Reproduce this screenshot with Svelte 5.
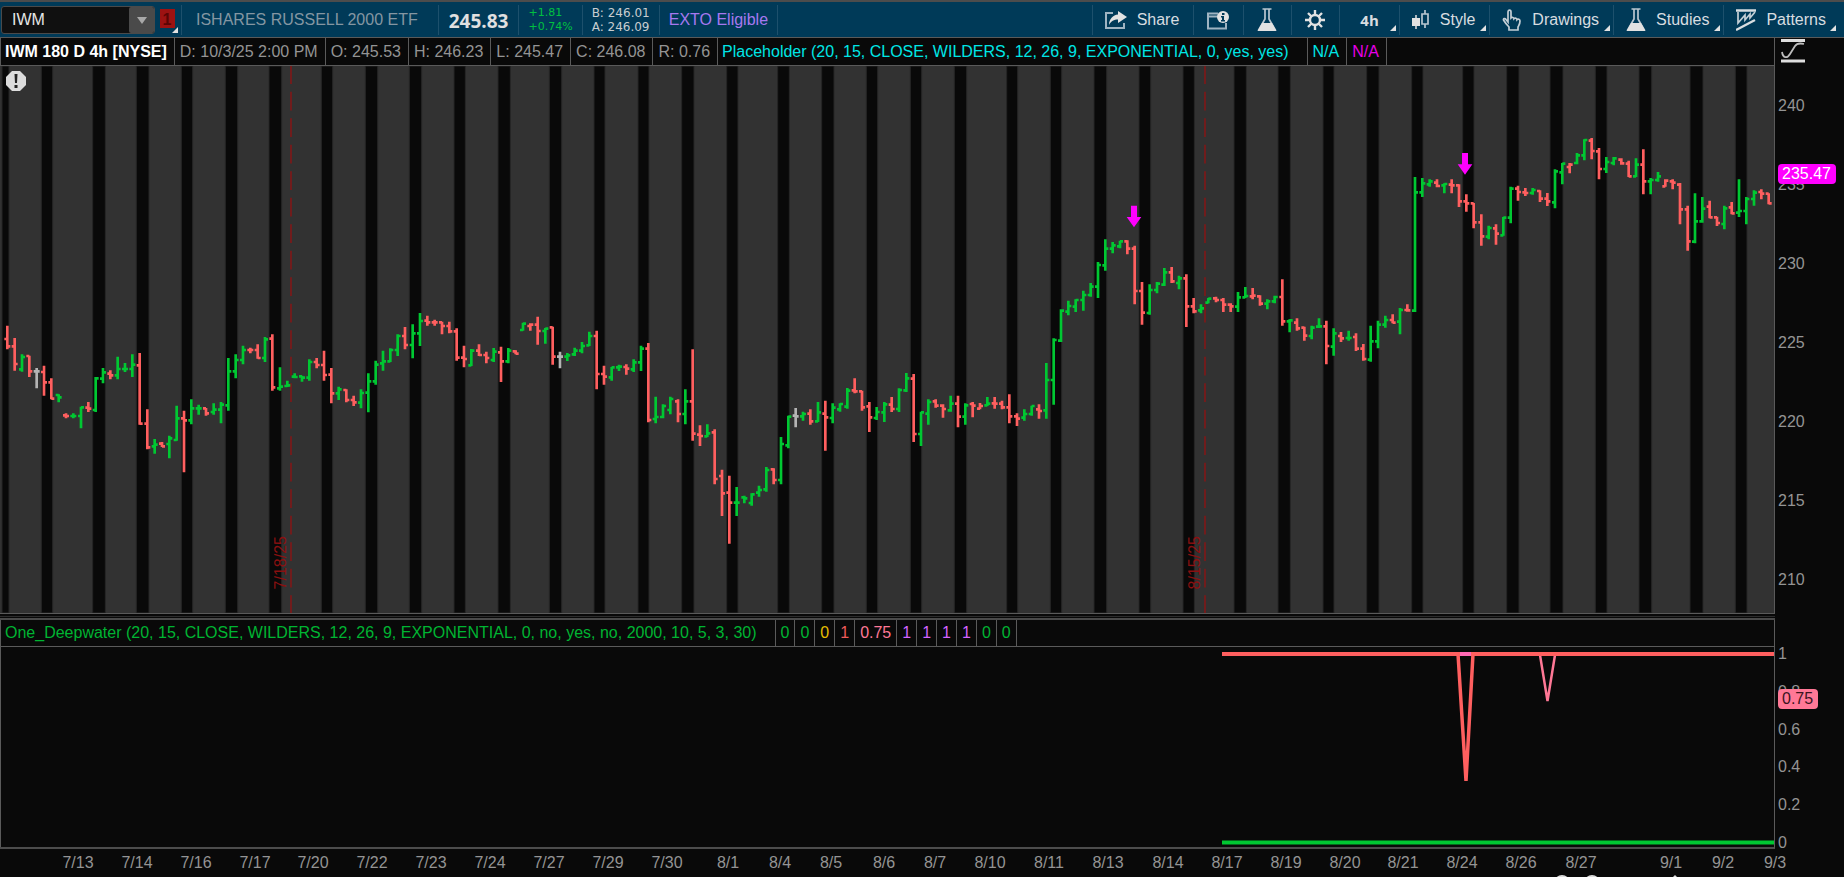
<script lang="ts">
  type Segment = { base: number; rows: string };

  const quote = [
    'D: 10/3/25 2:00 PM',
    'O: 245.53',
    'H: 246.23',
    'L: 245.47',
    'C: 246.08',
    'R: 0.76',
  ];

  const studyValues = [
    { text: '0', tone: 'green' },
    { text: '0', tone: 'green' },
    { text: '0', tone: 'yellow' },
    { text: '1', tone: 'red' },
    { text: '0.75', tone: 'pink' },
    { text: '1', tone: 'violet' },
    { text: '1', tone: 'violet' },
    { text: '1', tone: 'violet' },
    { text: '1', tone: 'violet' },
    { text: '0', tone: 'green' },
    { text: '0', tone: 'green' },
  ];

  const prices = [240, 235, 230, 225, 220, 215, 210];
  const levels = [1, 0.8, 0.6, 0.4, 0.2, 0];
  const priceTop = (price: number) => ((40 + (240 - price) * 15.8) / 547) * 100;
  const levelTop = (level: number) => ((196 - level * 189) / 202) * 100;

  const dates: [string, number][] = [
    ['7/13', 78], ['7/14', 137], ['7/16', 196], ['7/17', 255], ['7/20', 313],
    ['7/22', 372], ['7/23', 431], ['7/24', 490], ['7/27', 549], ['7/29', 608],
    ['7/30', 667], ['8/1', 728], ['8/4', 780], ['8/5', 831], ['8/6', 884],
    ['8/7', 935], ['8/10', 990], ['8/11', 1049], ['8/13', 1108], ['8/14', 1168],
    ['8/17', 1227], ['8/19', 1286], ['8/20', 1345], ['8/21', 1403], ['8/24', 1462],
    ['8/26', 1521], ['8/27', 1581], ['9/1', 1671], ['9/2', 1723], ['9/3', 1775],
  ];

  const expirations = [
    { label: '7/18/25', x: 291 },
    { label: '8/15/25', x: 1205 },
  ];

  // overnight sessions: start, end
  const nights = [
    [6, 27], [124, 158], [278, 316], [409, 447], [544, 578], [676, 713],
    [807, 845], [964, 998], [1096, 1133], [1228, 1265], [1362, 1396],
    [1494, 1531], [1648, 1685], [1782, 1815], [1914, 1947], [2045, 2082],
    [2180, 2214], [2333, 2368], [2465, 2502], [2599, 2633], [2731, 2765],
    [2863, 2900], [3020, 3053], [3151, 3185], [3282, 3320], [3417, 3452],
    [3549, 3583], [3702, 3739], [3834, 3871], [3969, 4002], [4100, 4137],
    [4235, 4269], [4388, 4422], [4520, 4557], [4650, 4689], [4786, 4821],
    [4917, 4955], [5070, 5109], [5206, 5241],
  ];

  // colour, high, low, open, close
  const segments: Segment[] = [
    {
      base: 642,
      rows: `r 137 208 177 199,r 174 272 199 252,g 223 275 268 231,r 227 291 228 274,
        w 264 325 274 274,r 257 347 276 307,r 295 358 307 356,g 343 367 345 352,
        r 400 415 406 408,g 400 415 408 408,g 380 445 408 382,r 366 396 383 386,
        g 291 396 390 295,g 264 310 296 277,r 271 298 281 286,g 230 298 286 267,
        g 249 276 267 267,g 223 291 267 254,r 219 434 256 431,r 388 508 431 502,
        g 477 521 499 494,r 486 501 491 499,g 467 535 492 475,g 377 482 480 415,
        r 392 577 415 421,g 358 433 421 385,g 374 404 385 385,r 384 407 385 400,
        g 370 404 396 389,g 366 430 389 374,g 234 392 376 274,g 223 295 274 240,
        g 197 253 240 210,r 203 220 210 210,r 193 236 210 234,g 171 246 234 178,
        r 163 332 176 322,g 262 332 325 320,g 302 321 318 316,g 280 295 290 291,
        g 287 305 289 293,g 238 302 293 246,r 234 265 246 255,r 212 302 255 285,
        r 264 370 284 340,g 320 360 340 328,r 328 367 330 360,r 347 378 360 367,
        g 328 385 368 339,g 280 397 338 304,g 242 314 304 254,g 212 272 250 244,
        g 205 246 244 210,g 163 228 210 168,r 141 208 168 195,g 133 235 195 160,
        g 99 198 160 123,r 107 137 122 127,r 119 137 127 127,r 125 163 127 138,
        r 125 160 138 154,r 145 242 154 233,r 197 262 233 237,g 207 258 256 212,
        r 193 228 212 225,r 215 250 225 234,g 204 246 240 215,r 200 306 217 244,
        g 204 250 244 212,r 211 223 214 221,g 128 152 150 131,r 130 152 138 134,
        r 110 194 134 153,g 144 191 153 146,r 140 254 142 230,w 215 265 230 230,
        g 219 243 230 226,g 203 228 223 212,g 186 220 212 198,g 155 198 196 168,
        r 152 328 168 282,r 257 314 282 290,g 261 302 292 262,g 254 273 262 260,
        r 253 284 261 266,g 238 276 268 247,g 197 273 247 206,r 189 427 206 420,
        g 350 430 417 411,g 373 415 411 378,g 350 403 390 357,r 358 427 364 402,
        g 328 433 402 364,r 208 482 364 461,r 436 498 464 468,g 433 471 469 460,
        r 448 613 457 597,r 569 708 588 640,r 587 791 638 668,g 621 708 668 668,
        g 647 670 652 655,g 640 677 669 643,g 617 650 638 630,g 561 635 628 570,
        r 565 613 568 600`,
    },
    {
      base: 822,
      rows: `g 291 433 420 312,g 227 325 316 230,w 204 262 227 229,g 215 242 229 222,
        r 208 254 221 244,g 186 246 244 217,r 182 332 221 232,g 190 250 234 203,
        g 190 215 208 192,g 144 206 200 152,r 115 160 151 154,r 152 212 154 202,
        r 186 276 199 232,g 201 240 234 216,g 186 246 217 193,r 171 216 194 207,
        g 145 216 207 150,g 99 156 151 115,r 102 306 116 282,g 215 318 282 217,
        g 178 254 221 186,r 178 203 184 197,r 193 233 197 207,g 167 215 211 191,
        r 167 262 191 230,g 190 254 230 196,r 186 232 192 197,r 189 208 206 198,
        g 171 198 196 191,r 171 206 190 191,r 182 208 191 202,r 163 250 202 229,
        r 220 258 229 236,g 208 242 233 222,g 197 227 222 198,r 193 236 208 213,
        g 69 236 211 120`,
    },
    {
      base: 342,
      rows: `g 475 674 600 480,g 388 486 482 392,g 362 406 395 378,g 358 396 380 360,
        g 332 392 360 345,g 309 350 345 320,g 246 354 320 255,g 178 272 256 206,
        g 186 220 206 196,g 182 205 199 184,r 181 223 184 206,r 197 373 206 333,
        r 306 434 333 398,g 313 404 399 330,g 306 340 330 311,g 264 318 314 277,
        r 261 309 277 304,g 287 328 309 295,r 283 441 295 379,r 354 400 379 394,
        g 373 400 391 385,g 354 370 368 356,r 350 367 355 360,r 354 396 360 374,
        r 370 396 374 379,g 336 396 380 352,g 321 354 352 348,r 324 358 349 347,
        r 346 377 349 371,g 358 388 371 364,g 347 370 364 351,r 298 437 351 424,
        g 418 457 424 421,r 415 452 428 445,r 440 482 443 467,g 437 478 468 443,
        g 415 444 440 439,r 422 553 439 498,g 445 527 500 460,r 456 486 468 475,
        g 452 482 474 474,r 460 513 471 506,r 492 542 506 537,g 437 545 539 484,
        g 422 505 484 434,g 407 443 434 420,r 403 430 420 428,g 384 463 425 390,
        r 373 395 390 391`,
    },
    {
      base: 162,
      rows: `g 171 576 572 217,g 174 231 217 190,g 178 200 193 184,r 178 202 188 198,
        g 190 220 196 192,r 178 220 194 196,r 193 261 196 244,r 223 275 244 250,
        r 249 325 250 307,r 283 377 307 349,g 317 358 350 324,r 313 374 325 341,
        g 291 347 346 293,g 200 310 293 206,r 197 242 206 216,r 204 228 217 219,
        g 204 224 219 210,r 211 246 213 236,r 219 258 236 244,g 148 265 247 154,
        g 129 193 157 131,r 129 160 141 134,g 99 133 129 106,g 58 121 106 60,
        r 54 118 62 93,r 84 178 94 147,g 111 159 147 126,g 111 136 129 115,
        r 115 134 119 130,r 122 171 131 169,g 115 171 169 134,r 88 223 134 184,
        g 174 223 184 180,g 156 185 180 169,r 178 200 199 182,r 178 208 184 188,
        r 189 313 194 268,r 257 392 268 364,g 220 370 365 304,g 231 308 304 266,
        r 242 295 260 292,r 290 318 292 309,g 257 328 312 265,r 246 283 262 280,
        g 178 291 278 273,g 231 313 273 237,g 211 257 237 218,r 208 238 216 221,
        r 220 253 221 250`,
    },
  ];

  const bars = segments
    .flatMap(({ base, rows }) =>
      rows.split(',').map((row) => {
        const [tone, ...values] = row.trim().split(' ');
        const [high, low, open, close] = values.map((v) => Number(v) + base);
        return { tone, high, low, open, close };
      })
    )
    .map((bar, i) => ({ ...bar, x: Math.round(21.5 + i * 22.11) }));

  const signals = [
    { x: 3402, y: 419 },
    { x: 4395, y: 261 },
  ];
</script>

<div class="app">
  <header class="toolbar">
    <form class="symbol">
      <input aria-label="Symbol" value="IWM" />
      <button type="button" aria-label="Symbol list">
        <svg width="10" height="7" viewBox="0 0 10 7"><path d="M0 0h10L5 7z" fill="#a8a8a8" /></svg>
      </button>
    </form>
    <button class="link-color corner" type="button">1</button>
    <div class="name">ISHARES RUSSELL 2000 ETF</div>
    <div class="last">245.83</div>
    <div class="change"><span>+1.81</span><span>+0.74%</span></div>
    <div class="bidask"><span>B: 246.01</span><span>A: 246.09</span></div>
    <div class="exto">EXTO Eligible</div>
    <nav class="tools">
      <button type="button">
        <svg width="22" height="18" viewBox="0 0 22 18">
          <path d="M8 2H1v15h18v-5" fill="none" stroke="#9fb4c2" stroke-width="2" />
          <path d="M13 0l9 6-9 6V8.500C9 8.500 6 10 4 14 4 8 8 4 13 3.500z" fill="#e2e2e2" />
        </svg>
        Share
      </button>
      <button class="icon-only" type="button" aria-label="Symbol info">
        <svg width="22" height="19" viewBox="0 0 22 19">
          <path d="M11 2.500H1v15h18V12" fill="none" stroke="#9fb4c2" stroke-width="2" />
          <path d="M1 5.500h11" stroke="#9fb4c2" stroke-width="2" />
          <circle cx="16" cy="6" r="6" fill="#e2e2e2" />
          <path d="M15 2h2.500v2H15zM14 5h3v4h1v1.500h-4V9h1V6.500h-1z" fill="#003a58" />
        </svg>
      </button>
      <button class="icon-only" type="button" aria-label="Analyze">
        <svg width="20" height="24" viewBox="0 0 20 24">
          <path d="M5.500 1h9M8 1v10L2 21.500h16L12 11V1" fill="none" stroke="#b9c6cf" stroke-width="1.700" />
          <path d="M5 15h10l4.500 8H.5z" fill="#e2e2e2" />
        </svg>
      </button>
      <button class="icon-only" type="button" aria-label="Settings">
        <svg width="20" height="20" viewBox="0 0 20 20">
          <path d="M10 0v20M0 10h20M3 3l14 14M17 3L3 17" stroke="#e2e2e2" stroke-width="2.400" />
          <circle cx="10" cy="10" r="5" fill="#003a58" stroke="#e2e2e2" stroke-width="2.400" />
        </svg>
      </button>
      <button class="frame corner" type="button">4h</button>
      <button class="corner" type="button">
        <svg width="18" height="20" viewBox="0 0 18 20">
          <path d="M4 5v14" stroke="#e2e2e2" stroke-width="1.500" />
          <path d="M0 8h8v8H0z" fill="#e2e2e2" />
          <path d="M13 0v4M13 14v4M10 4h6v10h-6z" fill="none" stroke="#b9c6cf" stroke-width="1.700" />
        </svg>
        Style
      </button>
      <button class="corner" type="button">
        <svg width="20" height="22" viewBox="0 0 20 22">
          <path
            d="M6 13V3c0-2.500 3-2.500 3 0v6c1-1 3-.6 3 .6 1-1 3-.4 3 1 1-1 3-.3 3 1.400 0 3-1 4-2 6v3H7v-3c-2-2-4-4.500-5.500-7C1 9.500 3 9 4 10.500z"
            fill="none"
            stroke="#c4cfd6"
            stroke-width="1.700"
          />
        </svg>
        Drawings
      </button>
      <button class="corner" type="button">
        <svg width="20" height="24" viewBox="0 0 20 24">
          <path d="M5.500 1h9M8 1v10L2 21.500h16L12 11V1" fill="none" stroke="#b9c6cf" stroke-width="1.700" />
          <path d="M5 15h10l4.500 8H.5z" fill="#e2e2e2" />
        </svg>
        Studies
      </button>
      <button class="corner" type="button">
        <svg width="20" height="22" viewBox="0 0 20 22">
          <path d="M0 1.500h20M0 21L19 11" fill="none" stroke="#d8dde0" stroke-width="2.400" />
          <path d="M2 3v11l7-8v5l5-6v4l5-6" fill="none" stroke="#c4cfd6" stroke-width="1.700" />
        </svg>
        Patterns
      </button>
    </nav>
  </header>

  <main>
    <div class="cells upper">
      <strong>IWM 180 D 4h [NYSE]</strong>
      {#each quote as item}
        <span>{item}</span>
      {/each}
      <span class="title cyan">Placeholder (20, 15, CLOSE, WILDERS, 12, 26, 9, EXPONENTIAL, 0, yes, yes)</span>
      <span class="cyan">N/A</span>
      <span class="magenta">N/A</span>
    </div>
    <button class="scale" type="button" aria-label="Price scale">
      <svg width="24" height="24" viewBox="0 0 24 24">
        <path d="M0 1.500h24M0 22h24" stroke="#dedede" stroke-width="3" />
        <path d="M1 13c1 6 5 7 8 2l5-8c2-3 5-3 9-2" fill="none" stroke="#bdbdbd" stroke-width="1.800" />
      </svg>
    </button>

    <section class="plot price" aria-label="IWM price chart">
      <svg class="canvas" viewBox="0 0 5322 1641" preserveAspectRatio="none">
        <rect width="5322" height="1641" fill="#323232" />
        {#each nights as [start, end]}
          <rect x={start} y="0" width={end - start} height="1641" fill="#090909" stroke="#262626" stroke-width="3" />
        {/each}
        {#each expirations as { x }}
          <path class="expiry" d={`M${x * 3} 0V1641`} />
        {/each}
        {#each bars as { tone, x, high, low, open, close }}
          <path class={tone} d={`M${x} ${high}V${low}M${x - 9} ${open}H${x}M${x} ${close}H${x + 9}`} />
        {/each}
        {#each signals as { x, y }}
          <path d={`M${x - 9} ${y}h18v34h13l-22 31-22-31h13z`} fill="#ff00ff" />
        {/each}
      </svg>
      <svg class="alert" width="22" height="22" viewBox="0 0 22 22">
        <path d="M7 1h8l6 6v8l-6 6H7l-6-6V7z" fill="#dcdcdc" />
        <path d="M9.500 4h3L12 13h-2zM9.500 15h3v3h-3z" fill="#222" />
      </svg>
      {#each expirations as { label, x }}
        <span class="expiry-label" style:left={`${(x / 1774) * 100}%`}>{label}</span>
      {/each}
    </section>
    <aside class="axis">
      {#each prices as price}
        <span style:top={`${priceTop(price)}%`}>{price}</span>
      {/each}
      <b class="last-price" style:top={`${priceTop(235.7)}%`}>235.47</b>
    </aside>

    <div class="splitter"></div>

    <div class="cells lower">
      <span class="title green">One_Deepwater (20, 15, CLOSE, WILDERS, 12, 26, 9, EXPONENTIAL, 0, no, yes, no, 2000, 10, 5, 3, 30)</span>
      {#each studyValues as { text, tone }}
        <span class={tone}>{text}</span>
      {/each}
    </div>

    <section class="plot study" aria-label="One_Deepwater study">
      <svg class="canvas" viewBox="0 0 1774 200" preserveAspectRatio="none">
        <path d="M1540 8L1547.500 54L1555 8" fill="none" stroke="#ff7896" stroke-width="2.500" />
        <path d="M1458 7L1466 134L1473 7" fill="none" stroke="#ff5f5f" stroke-width="3.500" stroke-linejoin="bevel" />
        <path d="M1222 7H1774" stroke="#ff5f5f" stroke-width="4" />
        <path d="M1460 7H1471" stroke="#ff69b4" stroke-width="4" />
        <path d="M1222 195.500H1774" stroke="#00c832" stroke-width="4" />
      </svg>
    </section>
    <aside class="axis">
      {#each levels as level}
        <span style:top={`${levelTop(level)}%`}>{level}</span>
      {/each}
      <b class="study-value" style:top={`${levelTop(0.76)}%`}>0.75</b>
    </aside>

    <footer class="dates">
      {#each dates as [label, x]}
        <span style:left={`${(x / 1844) * 100}%`}>{label}</span>
      {/each}
      <svg class="handles" width="124" height="3" viewBox="0 0 124 3">
        <circle cx="8" cy="9" r="8" fill="#dcdcdc" />
        <circle cx="38" cy="9" r="8" fill="#dcdcdc" />
        <path d="M119 3l2-2 2 2z" fill="#dcdcdc" />
      </svg>
    </footer>
  </main>
</div>

<style>
  :global(body) {
    background: #090909;
  }

  .app {
    display: flex;
    flex-direction: column;
    height: 100vh;
    min-height: 480px;
    overflow: hidden;
    background: #090909;
    color: #949494;
    font-family: 'Liberation Sans', Arial, sans-serif;
    font-size: 16px;
    line-height: 20px;
    white-space: nowrap;
  }

  button,
  input {
    margin: 0;
    padding: 0;
    border: 0;
    background: none;
    color: inherit;
    font: inherit;
  }

  .toolbar {
    display: flex;
    flex: none;
    box-sizing: border-box;
    height: 38px;
    border-top: 2px solid #4c4c4c;
    border-bottom: 1px solid #5a5a5a;
    background: #003a58;
  }

  .symbol {
    display: flex;
    box-sizing: border-box;
    width: 154px;
    height: 28px;
    margin: 4px 4px 0 1px;
    border: 1px solid #4a4a4a;
    border-radius: 3px;
    background: #101010;
  }

  .symbol input {
    flex: 1;
    min-width: 0;
    padding-left: 10px;
    color: #e6e6e6;
    outline: none;
  }

  .symbol button {
    display: flex;
    align-items: center;
    justify-content: center;
    width: 25px;
    border-radius: 2px;
    background: #4a4a4a;
  }

  .corner {
    position: relative;
  }

  .corner::after {
    content: '';
    position: absolute;
    right: 3px;
    bottom: 4px;
    border-bottom: 6px solid #e2e2e2;
    border-left: 6px solid transparent;
  }

  .link-color {
    width: 22px;
    padding-right: 6px;
    color: #5a0505;
    font-weight: 700;
    line-height: 18px;
    background: linear-gradient(#9c1212, #9c1212) 1px 7px / 15px 19px no-repeat;
  }

  .name,
  .last,
  .change,
  .bidask,
  .exto {
    display: flex;
    align-items: center;
    margin: 3px 0 2px;
    border-right: 1px solid #1d506c;
  }

  .name {
    padding: 0 20px 0 14px;
    border-left: 1px solid #1d506c;
    color: #8496a2;
  }

  .last {
    padding: 2px 10px 0;
    color: #e0e0e0;
    font-family: 'Open Sans', sans-serif;
    font-size: 19px;
    font-weight: 700;
  }

  .change,
  .bidask {
    flex-direction: column;
    align-items: flex-start;
    justify-content: center;
    padding: 0 9px;
    font-family: 'DejaVu Sans', sans-serif;
    line-height: 14px;
  }

  .change {
    color: #00c040;
    font-size: 11px;
  }

  .bidask {
    color: #c8cdd0;
    font-size: 12px;
  }

  .exto {
    padding: 0 9px;
    color: #a678f0;
  }

  .tools {
    display: flex;
    margin: 3px 0 2px auto;
    color: #d8dde0;
  }

  .tools button {
    display: flex;
    align-items: center;
    gap: 10px;
    padding: 0 14px 0 12px;
    border-left: 1px solid #1d506c;
  }

  .tools button:last-child {
    padding-right: 18px;
  }

  .tools button:last-child::after {
    right: 8px;
  }

  .tools .icon-only {
    padding: 0 14px 0 13px;
  }

  .tools .frame {
    padding: 0 20px;
    font-family: 'Open Sans', sans-serif;
    font-size: 15px;
    font-weight: 700;
  }

  main {
    display: grid;
    flex: 1;
    min-height: 0;
    grid-template-columns: minmax(0, 1fr) 69px;
    grid-template-rows: 28px minmax(0, 547fr) 7px 27px minmax(0, 202fr) 28px;
  }

  .cells {
    display: flex;
    min-width: 0;
    overflow: hidden;
    border: solid #5a5a5a;
    border-width: 0 1px 1px;
    grid-column: 1;
  }

  .cells > * {
    flex: none;
    display: flex;
    align-items: center;
    padding: 0 5px 1px;
    border-right: 1px solid #5a5a5a;
  }

  .upper > * {
    padding: 0 7px 0 5px;
  }

  .cells strong {
    padding-left: 4px;
    color: #fff;
  }

  .cells .title {
    padding-right: 18px;
    padding-left: 4px;
  }

  .scale {
    display: flex;
    align-items: center;
    padding-left: 6px;
    padding-bottom: 2px;
  }

  .plot {
    position: relative;
    min-width: 0;
    border-right: 1px solid #5a5a5a;
    grid-column: 1;
  }

  .study {
    box-sizing: border-box;
    box-shadow: inset 1px 0 #5a5a5a;
    border-bottom: 2px solid #4c4c4c;
  }

  .canvas {
    display: block;
    width: 100%;
    height: 100%;
  }

  .price path {
    stroke-width: 8;
  }

  .r {
    stroke: #ff5f5f;
  }

  .g {
    stroke: #00c832;
  }

  .w {
    stroke: #b4b4b4;
  }

  .price .expiry {
    stroke: #911212;
    stroke-width: 4;
    stroke-dasharray: 56 23.500;
    stroke-dashoffset: 2;
  }

  .alert {
    position: absolute;
    top: 4px;
    left: 5px;
  }

  .expiry-label {
    position: absolute;
    bottom: 24px;
    margin-left: -18px;
    color: #8a1010;
    line-height: 16px;
    writing-mode: vertical-rl;
    transform: rotate(180deg);
  }

  .axis {
    position: relative;
    grid-column: 2;
  }

  .axis > * {
    position: absolute;
    left: 3px;
    transform: translateY(-50%);
  }

  .axis b {
    padding: 0 5px 0 4px;
    border-radius: 4px;
    font-weight: 400;
    line-height: 20px;
  }

  .last-price {
    background: #ff00ff;
    color: #fff;
  }

  .study-value {
    background: #ff7896;
    color: #3c141e;
  }

  .splitter {
    box-sizing: border-box;
    border-top: 1px solid #5a5a5a;
    border-bottom: 2px solid #4a4a4a;
    background: linear-gradient(#2c2c2c, #2c2c2c) 0 2px / 100% 1px no-repeat;
    grid-column: 1;
  }

  .dates {
    position: relative;
    grid-column: 1 / 3;
  }

  .dates span {
    position: absolute;
    top: 4px;
    transform: translateX(-50%);
  }

  .handles {
    position: absolute;
    bottom: 0;
    left: 84.3%;
  }

  .cyan {
    color: #00e6e6;
  }

  .magenta {
    color: #e600e6;
  }

  .green {
    color: #00b432;
  }

  .yellow {
    color: #e6be00;
  }

  .red {
    color: #f05a5a;
  }

  .pink {
    color: #ff7896;
  }

  .violet {
    color: #d264ff;
  }
</style>
